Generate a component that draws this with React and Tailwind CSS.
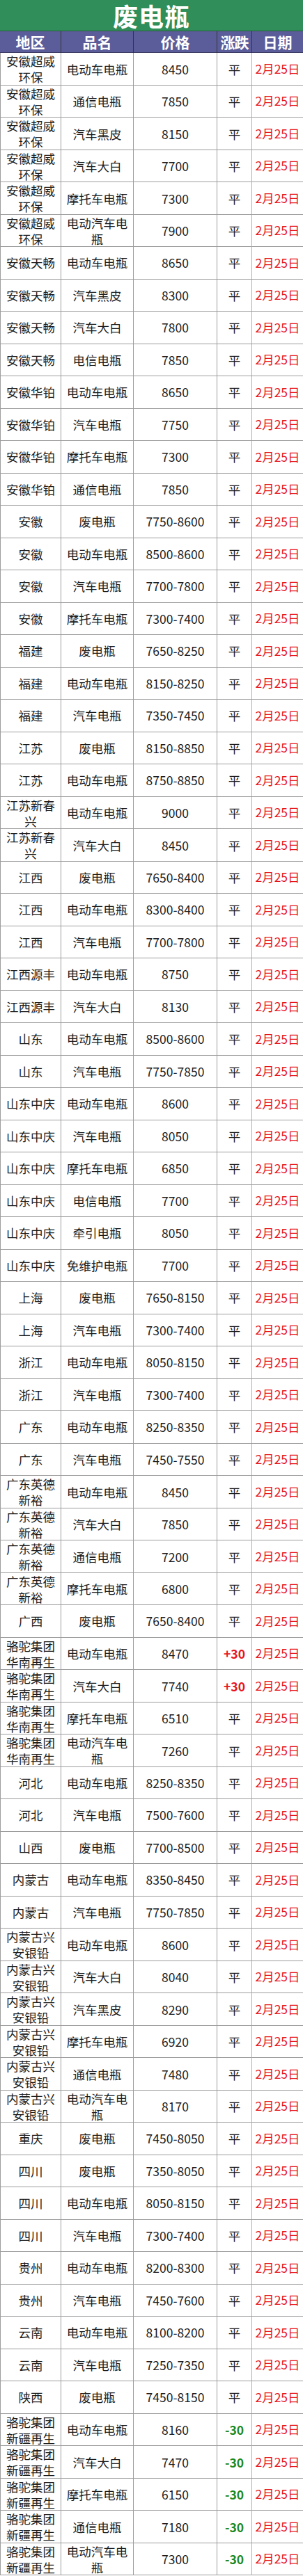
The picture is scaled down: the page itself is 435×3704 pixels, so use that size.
import React from 'react';

// 废电瓶 报价表：地区 / 品名 / 价格 / 涨跌 / 日期
const CW = '骆驼集团华南再生';
const XJ = '骆驼集团新疆再生';
const XA = '内蒙古兴安银铅';

const rows = [
  ['安徽超威环保', '电动车电瓶', '8450'],
  ['安徽超威环保', '通信电瓶', '7850'],
  ['安徽超威环保', '汽车黑皮', '8150'],
  ['安徽超威环保', '汽车大白', '7700'],
  ['安徽超威环保', '摩托车电瓶', '7300'],
  ['安徽超威环保', '电动汽车电瓶', '7900'],
  ['安徽天畅', '电动车电瓶', '8650'],
  ['安徽天畅', '汽车黑皮', '8300'],
  ['安徽天畅', '汽车大白', '7800'],
  ['安徽天畅', '电信电瓶', '7850'],
  ['安徽华铂', '电动车电瓶', '8650'],
  ['安徽华铂', '汽车电瓶', '7750'],
  ['安徽华铂', '摩托车电瓶', '7300'],
  ['安徽华铂', '通信电瓶', '7850'],
  ['安徽', '废电瓶', '7750-8600'],
  ['安徽', '电动车电瓶', '8500-8600'],
  ['安徽', '汽车电瓶', '7700-7800'],
  ['安徽', '摩托车电瓶', '7300-7400'],
  ['福建', '废电瓶', '7650-8250'],
  ['福建', '电动车电瓶', '8150-8250'],
  ['福建', '汽车电瓶', '7350-7450'],
  ['江苏', '废电瓶', '8150-8850'],
  ['江苏', '电动车电瓶', '8750-8850'],
  ['江苏新春兴', '电动车电瓶', '9000'],
  ['江苏新春兴', '汽车大白', '8450'],
  ['江西', '废电瓶', '7650-8400'],
  ['江西', '电动车电瓶', '8300-8400'],
  ['江西', '汽车电瓶', '7700-7800'],
  ['江西源丰', '电动车电瓶', '8750'],
  ['江西源丰', '汽车大白', '8130'],
  ['山东', '电动车电瓶', '8500-8600'],
  ['山东', '汽车电瓶', '7750-7850'],
  ['山东中庆', '电动车电瓶', '8600'],
  ['山东中庆', '汽车电瓶', '8050'],
  ['山东中庆', '摩托车电瓶', '6850'],
  ['山东中庆', '电信电瓶', '7700'],
  ['山东中庆', '牵引电瓶', '8050'],
  ['山东中庆', '免维护电瓶', '7700'],
  ['上海', '废电瓶', '7650-8150'],
  ['上海', '汽车电瓶', '7300-7400'],
  ['浙江', '电动车电瓶', '8050-8150'],
  ['浙江', '汽车电瓶', '7300-7400'],
  ['广东', '电动车电瓶', '8250-8350'],
  ['广东', '汽车电瓶', '7450-7550'],
  ['广东英德新裕', '电动车电瓶', '8450'],
  ['广东英德新裕', '汽车大白', '7850'],
  ['广东英德新裕', '通信电瓶', '7200'],
  ['广东英德新裕', '摩托车电瓶', '6800'],
  ['广西', '废电瓶', '7650-8400'],
  [CW, '电动车电瓶', '8470', '+30'],
  [CW, '汽车大白', '7740', '+30'],
  [CW, '摩托车电瓶', '6510'],
  [CW, '电动汽车电瓶', '7260'],
  ['河北', '电动车电瓶', '8250-8350'],
  ['河北', '汽车电瓶', '7500-7600'],
  ['山西', '废电瓶', '7700-8500'],
  ['内蒙古', '电动车电瓶', '8350-8450'],
  ['内蒙古', '汽车电瓶', '7750-7850'],
  [XA, '电动车电瓶', '8600'],
  [XA, '汽车大白', '8040'],
  [XA, '汽车黑皮', '8290'],
  [XA, '摩托车电瓶', '6920'],
  [XA, '通信电瓶', '7480'],
  [XA, '电动汽车电瓶', '8170'],
  ['重庆', '废电瓶', '7450-8050'],
  ['四川', '废电瓶', '7350-8050'],
  ['四川', '电动车电瓶', '8050-8150'],
  ['四川', '汽车电瓶', '7300-7400'],
  ['贵州', '电动车电瓶', '8200-8300'],
  ['贵州', '汽车电瓶', '7450-7600'],
  ['云南', '电动车电瓶', '8100-8200'],
  ['云南', '汽车电瓶', '7250-7350'],
  ['陕西', '废电瓶', '7450-8150'],
  [XJ, '电动车电瓶', '8160', '-30'],
  [XJ, '汽车大白', '7470', '-30'],
  [XJ, '摩托车电瓶', '6150', '-30'],
  [XJ, '通信电瓶', '7180', '-30'],
  [XJ, '电动汽车电瓶', '7300', '-30'],
];

const cols = 'grid grid-cols-[88px_104px_120px_50px_73px]';
const cell = 'flex items-center justify-center text-center border-r border-[#9c9c9c] leading-[23px]';

const Change = ({ v }) => {
  if (!v) return <span>平</span>;
  const up = v.startsWith('+');
  return <span className={`font-bold ${up ? 'text-[#e8141c]' : 'text-[#1b8a22]'}`}>{v}</span>;
};

export default function App() {
  return (
    <div
      className="w-[435px] bg-white text-[#1c1c1c]"
      style={{ fontFamily: '"Noto Sans CJK SC", "Noto Sans", sans-serif' }}
    >
      <div className="h-[45px] bg-[#2f8e59] border-b border-[#2a5a3c] flex items-center justify-center">
        <span className="text-white font-bold text-[36px] leading-none tracking-[1px]">废电瓶</span>
      </div>

      <div className={`${cols} h-[31px] bg-[#5b5d9a] text-white font-bold text-[21px] border-b border-[#3d3d66]`}>
        <div className="flex items-center justify-center border-r border-[#333]">地区</div>
        <div className="flex items-center justify-center border-r border-[#333]">品名</div>
        <div className="flex items-center justify-center border-r border-[#333]">价格</div>
        <div className="flex items-center justify-center border-r border-[#333] tracking-[-1px]">涨跌</div>
        <div className="flex items-center justify-center">日期</div>
      </div>

      {rows.map(([area, name, price, chg], i) => (
        <div key={i} className={`${cols} h-[46.5px] border-b border-[#9c9c9c] text-[17.5px]`}>
          <div className={`${cell} border-l px-[4px]`}>{area}</div>
          <div className={`${cell} px-[6px]`}>{name}</div>
          <div className={cell}>{price}</div>
          <div className={`${cell} border-[#d99a9a]`}>
            <Change v={chg} />
          </div>
          <div className="flex items-center justify-center text-[#e8141c]">2月25日</div>
        </div>
      ))}
    </div>
  );
}
